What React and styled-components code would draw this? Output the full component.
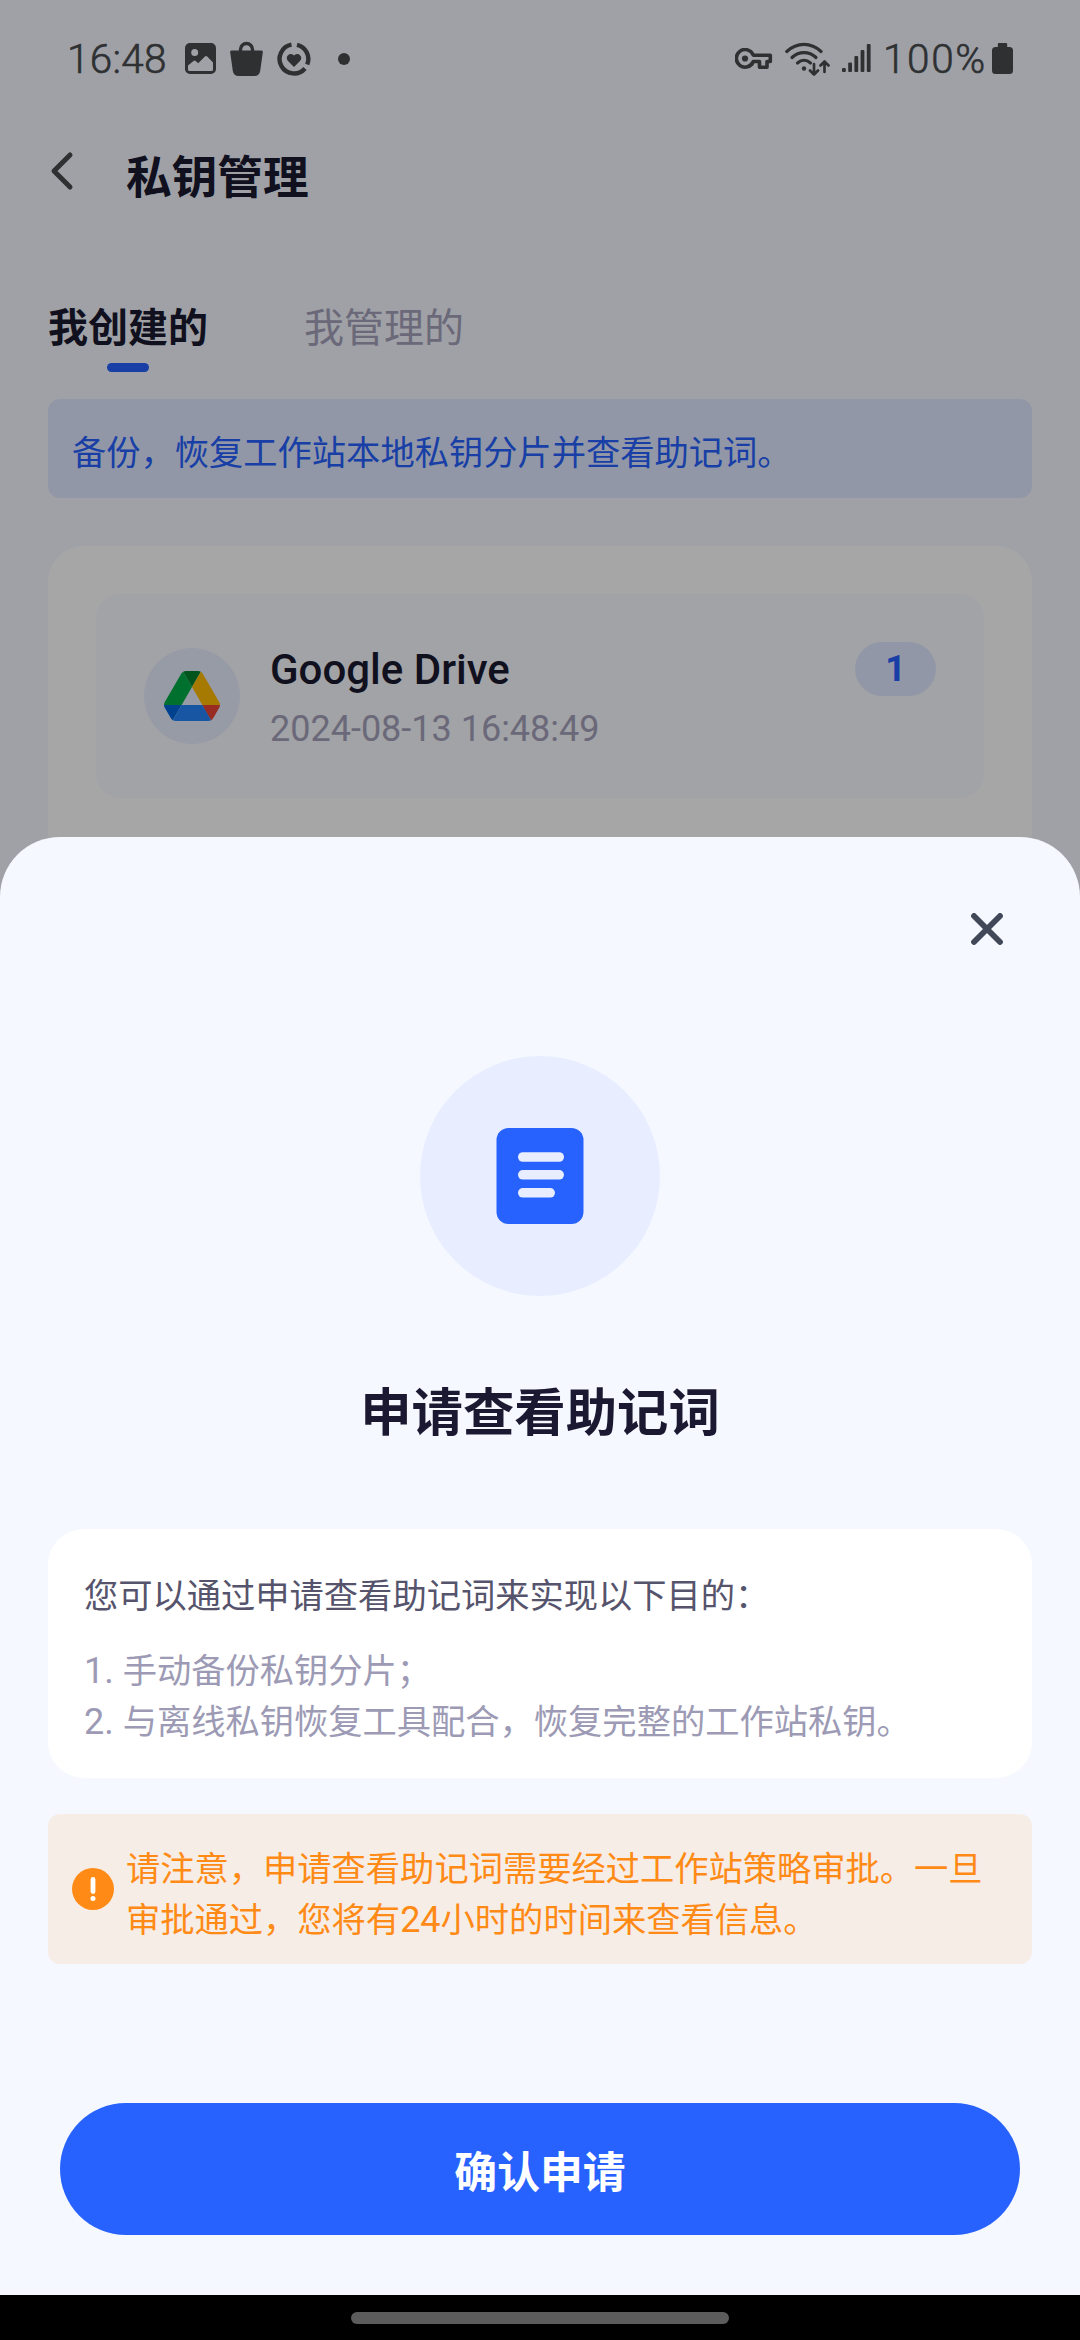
import React from "react";
import styled, { createGlobalStyle, css } from "styled-components";

const color = {
  page: "#f5f8ff",
  ink: "#1a1931",
  body: "#56546c",
  muted: "#9c9ab4",
  brand: "#2762ff",
  tint: "#e8eeff",
  warn: "#ff8a15",
};

const Global = createGlobalStyle`
  *, *::before, *::after { box-sizing: border-box; }
  body {
    margin: 0;
    background: ${color.page};
    font-family: "Noto Sans CJK SC", Roboto, sans-serif;
    color: ${color.ink};
  }
  p, h1, h2, ol { margin: 0; padding: 0; }
  button { border: 0; padding: 0; background: none; font: inherit; }
  svg { display: block; flex: none; }
`;

const Phone = styled.div`
  position: relative;
  display: flex;
  flex-direction: column;
  width: 1080px;
  height: 2340px;
  overflow: hidden;
`;

const latin = css`
  font-family: Roboto, sans-serif;
`;

/* Latin digits are drawn a little larger than the surrounding Han glyphs */
const Latin = styled.span`
  ${latin}
  font-size: 36px;
  line-height: 1;
`;

const StatusBar = styled.header`
  display: flex;
  justify-content: space-between;
  height: 120px;
  padding: 0 67px 3px 67px;
  align-items: center;
  color: #474a4e;
`;

const StatusGroup = styled.div`
  display: flex;
  align-items: center;
  gap: ${(p) => p.$gap}px;
`;

const StatusText = styled.span`
  ${latin}
  width: ${(p) => p.$width}px;
  font-size: 40.5px;
  font-weight: 300;
  -webkit-text-stroke: 0.6px currentColor;
  line-height: 48px;
  letter-spacing: ${(p) => p.$track || 0}px;
  white-space: nowrap;
`;

const AppBar = styled.div`
  display: flex;
  align-items: center;
  height: 114px;
  padding: 0 48px;
  gap: 51px;
`;

const BarTitle = styled.h1`
  font-size: 45.7px;
  line-height: 60px;
  font-weight: 700;
  padding-bottom: 6px;
`;

const BackButton = styled.button`
  color: #474a4e;
  padding-bottom: 13px;
`;

const Tabs = styled.nav`
  display: flex;
  gap: 96px;
  padding: 62px 48px 0;
  height: 165px;
`;

const Tab = styled.div`
  display: flex;
  flex-direction: column;
  align-items: center;
  font-size: 40px;
  line-height: 58px;
  font-weight: ${(p) => (p.$active ? 700 : 400)};
  color: ${(p) => (p.$active ? color.ink : "#a5a2bb")};

  &::after {
    content: "";
    width: 42px;
    height: 9px;
    margin-top: 9px;
    border-radius: 5px;
    background: ${(p) => (p.$active ? color.brand : "transparent")};
  }
`;

const Banner = styled.p`
  margin: 0 48px;
  padding: 3px 24px 0;
  height: 99px;
  line-height: 96px;
  border-radius: 12px;
  background: #dfe9ff;
  color: ${color.brand};
  font-size: 34.28px;
`;

const Card = styled.section`
  flex: 1;
  margin: 48px 48px 0;
  padding: 48px;
  border-radius: 36px 36px 0 0;
  background: #fff;
`;

const BackupRow = styled.div`
  display: flex;
  align-items: center;
  height: 204px;
  padding: 0 48px;
  border-radius: 24px;
  background: #f8faff;
`;

const RoundIcon = styled.div`
  display: grid;
  place-items: center;
  flex: none;
  width: ${(p) => p.$size}px;
  height: ${(p) => p.$size}px;
  border-radius: 50%;
  background: ${color.tint};
`;

const BackupText = styled.div`
  ${latin}
  flex: 1;
  display: flex;
  flex-direction: column;
  gap: 10px;
  margin-left: 30px;
  padding-top: 5px;
`;

const BackupName = styled.div`
  font-size: 42px;
  font-weight: 500;
  line-height: 50px;
`;

const BackupDate = styled.div`
  font-size: 36px;
  line-height: 48px;
  color: #a5a2bb;
`;

const Badge = styled.span`
  ${latin}
  align-self: flex-start;
  width: 81px;
  height: 54px;
  margin-top: 48px;
  line-height: 54px;
  text-align: center;
  font-size: 36px;
  font-weight: 700;
  border-radius: 27px;
  color: ${color.brand};
  background: #dfe9ff;
`;

const Scrim = styled.div`
  position: absolute;
  inset: 0;
  background: rgba(0, 0, 0, 0.35);
`;

const Sheet = styled.section`
  position: absolute;
  left: 0;
  right: 0;
  bottom: 45px;
  height: 1458px;
  display: flex;
  flex-direction: column;
  border-radius: 60px 60px 0 0;
  background: ${color.page};
  padding: 76px 48px 60px;
`;

const CloseButton = styled.button`
  align-self: flex-end;
  margin-right: 29px;
  color: #414857;
`;

const Hero = styled.div`
  display: flex;
  flex-direction: column;
  align-items: center;
  margin-top: 111px;
`;

const SheetTitle = styled.h2`
  margin-top: 76px;
  font-size: 51.4px;
  line-height: 74px;
  font-weight: 700;
`;

const InfoBox = styled.div`
  height: 249px;
  margin-top: 83px;
  padding: 39px 36px 0;
  border-radius: 36px;
  background: #fff;
  font-size: 34.28px;
  line-height: 51px;
`;

const InfoLead = styled.p`
  color: ${color.body};
`;

const InfoList = styled.ol`
  list-style: none;
  margin-top: 24px;
  color: ${color.muted};
`;

const InfoItem = styled.li`
  height: 51px;
  white-space: nowrap;
`;

const Alert = styled.div`
  display: flex;
  align-items: center;
  gap: 12px;
  height: 150px;
  margin-top: 36px;
  padding: 0 24px;
  border-radius: 12px;
  background: #f6ede7;
  color: ${color.warn};
`;

const AlertText = styled.p`
  font-size: 34.28px;
  line-height: 51px;
  padding-top: 6px;
  white-space: nowrap;
`;

const ConfirmButton = styled.button`
  height: 132px;
  margin: auto 12px 0;
  border-radius: 66px;
  background: ${color.brand};
  color: #fff;
  font-size: 42.85px;
  font-weight: 700;
`;

const NavBar = styled.footer`
  position: absolute;
  left: 0;
  right: 0;
  bottom: 0;
  height: 45px;
  padding-top: 1px;
  display: grid;
  place-items: center;
  background: #000;
`;

const NavPill = styled.div`
  width: 378px;
  height: 12px;
  border-radius: 6px;
  background: #5c5c5c;
`;

const GalleryIcon = () => (
  <svg width="31" height="31" viewBox="0 0 31 31" fill="currentColor">
    <path
      fillRule="evenodd"
      d="M5 0h21a5 5 0 0 1 5 5v21a5 5 0 0 1-5 5H5a5 5 0 0 1-5-5V5a5 5 0 0 1 5-5zM9.7 6a3.5 3.5 0 1 0 0 7 3.5 3.5 0 0 0 0-7zM3 22.5V26.500a1.500 1.500 0 0 0 1.500 1.500h22a1.500 1.500 0 0 0 1.500-1.500V19.500l-5.800-5.900a1.600 1.600 0 0 0-2.300 0l-6.700 6.700-2.500-2.300a1.600 1.600 0 0 0-2.200 0z"
    />
  </svg>
);

const BagIcon = () => (
  <svg width="33" height="36" viewBox="0 0 33 36">
    <path d="M10.500 11V8.500a6 6 0 0 1 12 0V11" fill="none" stroke="currentColor" strokeWidth="3.400" />
    <path
      d="M1.800 9.500h29.400a1.600 1.600 0 0 1 1.600 1.900L30.200 30a6 6 0 0 1-6 5H8.800a6 6 0 0 1-6-5L.2 11.400a1.600 1.600 0 0 1 1.600-1.900z"
      fill="currentColor"
    />
  </svg>
);

const HeartRingIcon = () => (
  <svg width="34" height="34" viewBox="0 0 34 34">
    <g fill="none" stroke="currentColor" strokeWidth="4.400">
      <path d="M14.500 2.700A14.500 14.500 0 1 0 28 26.500" />
      <path d="M20 2.800A14.500 14.500 0 0 1 30.200 22.500" />
    </g>
    <path
      d="M17 25l-6-6a4 4 0 0 1 0-5.800 4 4 0 0 1 6 .4 4 4 0 0 1 6-.4 4 4 0 0 1 0 5.800z"
      fill="currentColor"
    />
  </svg>
);

const DotSvg = (props) => (
  <svg width="12" height="12" viewBox="0 0 12 12" {...props}>
    <circle cx="6" cy="6" r="6" fill="currentColor" />
  </svg>
);

const DotIcon = styled(DotSvg)`
  margin-left: 13px;
`;

const KeyIcon = () => (
  <svg width="38" height="22" viewBox="0 0 38 22">
    <path
      d="M18.300 7.200H35.300v6.300H32v5.800H24.500v-5.800H18.300A8.800 8.800 0 1 1 18.300 7.200z"
      fill="none"
      stroke="currentColor"
      strokeWidth="3.600"
      strokeLinejoin="round"
    />
    <circle cx="10" cy="10.500" r="3.100" fill="currentColor" />
  </svg>
);

const WifiIcon = () => (
  <svg width="45" height="34" viewBox="0 0 45 34" fill="none" stroke="currentColor" strokeLinecap="round">
    <path d="M1.800 9.500C12 0 26 0 36 9.500" strokeWidth="3.200" />
    <path d="M7 15.500c7-6.500 17-6.500 24 0" strokeWidth="3.200" />
    <path d="M12.500 21c4-3.500 9-3.500 13 0" strokeWidth="3.200" />
    <circle cx="19" cy="26.500" r="2.200" fill="currentColor" stroke="none" />
    <g strokeWidth="2.700" strokeLinejoin="round">
      <path d="M29 22v10M25 28.500l4 4 4-4" />
      <path d="M39.500 30V20M35.500 23.500l4-4 4 4" />
    </g>
  </svg>
);

const SignalIcon = () => (
  <svg width="29" height="29" viewBox="0 0 29 29" fill="currentColor">
    <rect x="0" y="24" width="3.800" height="4" rx="1" />
    <rect x="6.200" y="18.500" width="3.800" height="9.500" rx="1" />
    <rect x="12.400" y="12" width="3.800" height="16" rx="1" />
    <rect x="18.600" y="6" width="3.800" height="22" rx="1" />
    <rect x="24.800" y="0" width="3.800" height="28" rx="1" />
  </svg>
);

const BatteryIcon = () => (
  <svg width="21" height="31" viewBox="0 0 21 31" fill="currentColor">
    <path d="M7 0h7a1.200 1.200 0 0 1 1.200 1.200V4H17.500A3.500 3.500 0 0 1 21 7.500v20a3.500 3.500 0 0 1-3.500 3.500h-14A3.500 3.500 0 0 1 0 27.500v-20A3.500 3.500 0 0 1 3.500 4H5.800V1.200A1.200 1.200 0 0 1 7 0z" />
  </svg>
);

const BackIcon = () => (
  <svg width="27" height="40" viewBox="0 0 27 40">
    <path
      d="M22 4L6 20l16 16"
      fill="none"
      stroke="currentColor"
      strokeWidth="5"
      strokeLinecap="round"
      strokeLinejoin="round"
    />
  </svg>
);

const DriveLogo = () => (
  <svg width="56" height="50" viewBox="0 0 87.3 78">
    <path d="m6.600 66.850 3.850 6.650c.8 1.400 1.950 2.500 3.300 3.300l13.750-23.800h-27.500c0 1.550.4 3.100 1.200 4.500z" fill="#0066da" />
    <path d="m43.650 25-13.750-23.800c-1.350.8-2.500 1.900-3.300 3.300l-25.400 44a9.060 9.060 0 0 0 -1.200 4.500h27.500z" fill="#00ac47" />
    <path d="m73.550 76.800c1.350-.8 2.500-1.900 3.300-3.300l1.600-2.750 7.650-13.250c.8-1.400 1.200-2.950 1.200-4.500h-27.502l5.852 11.500z" fill="#ea4335" />
    <path d="m43.650 25 13.750-23.800c-1.350-.8-2.900-1.200-4.500-1.200h-18.500c-1.600 0-3.150.45-4.500 1.200z" fill="#00832d" />
    <path d="m59.800 53h-32.300l-13.750 23.800c1.350.8 2.900 1.200 4.500 1.200h50.800c1.600 0 3.150-.45 4.500-1.200z" fill="#2684fc" />
    <path d="m73.400 26.500-12.700-22c-.8-1.400-1.950-2.500-3.300-3.300l-13.750 23.800 16.150 28h27.450c0-1.550-.4-3.100-1.200-4.500z" fill="#ffba00" />
  </svg>
);

const CloseIcon = () => (
  <svg width="32" height="32" viewBox="0 0 32 32">
    <path d="M3 3l26 26M29 3L3 29" fill="none" stroke="currentColor" strokeWidth="5.800" strokeLinecap="round" />
  </svg>
);

const DocumentIcon = () => (
  <svg width="88" height="96" viewBox="0 0 88 96">
    <rect x=".5" width="87" height="96" rx="12" fill={color.brand} />
    <g fill={color.tint}>
      <rect x="22" y="24.200" width="46" height="9.600" rx="4.800" />
      <rect x="22" y="42" width="46" height="9.600" rx="4.800" />
      <rect x="22" y="60" width="37" height="9.600" rx="4.800" />
    </g>
  </svg>
);

const AlertIcon = () => (
  <svg width="42" height="42" viewBox="0 0 42 42">
    <circle cx="21" cy="21" r="21" fill={color.warn} />
    <rect x="18.600" y="9" width="4.800" height="17" rx="2.400" fill="#fff" />
    <circle cx="21" cy="30.500" r="2.500" fill="#fff" />
  </svg>
);

export default function App() {
  return (
    <>
      <Global />
      <Phone>
        <StatusBar>
          <StatusGroup $gap={14}>
            <StatusText $width={104} $track={0.3}>
              16:48
            </StatusText>
            <GalleryIcon />
            <BagIcon />
            <HeartRingIcon />
            <DotIcon />
          </StatusGroup>
          <StatusGroup $gap={12}>
            <KeyIcon />
            <WifiIcon />
            <SignalIcon />
            <StatusText $width={97} $track={1.6}>
              100%
            </StatusText>
            <BatteryIcon />
          </StatusGroup>
        </StatusBar>

        <AppBar>
          <BackButton aria-label="返回">
            <BackIcon />
          </BackButton>
          <BarTitle>私钥管理</BarTitle>
        </AppBar>

        <Tabs>
          <Tab $active>我创建的</Tab>
          <Tab>我管理的</Tab>
        </Tabs>

        <Banner>备份，恢复工作站本地私钥分片并查看助记词。</Banner>

        <Card>
          <BackupRow>
            <RoundIcon $size={96}>
              <DriveLogo />
            </RoundIcon>
            <BackupText>
              <BackupName>Google Drive</BackupName>
              <BackupDate>2024-08-13 16:48:49</BackupDate>
            </BackupText>
            <Badge>1</Badge>
          </BackupRow>
        </Card>

        <Scrim />

        <Sheet>
          <CloseButton aria-label="关闭">
            <CloseIcon />
          </CloseButton>
          <Hero>
            <RoundIcon $size={240}>
              <DocumentIcon />
            </RoundIcon>
            <SheetTitle>申请查看助记词</SheetTitle>
          </Hero>
          <InfoBox>
            <InfoLead>您可以通过申请查看助记词来实现以下目的：</InfoLead>
            <InfoList>
              <InfoItem>
                <Latin>1. </Latin>手动备份私钥分片；
              </InfoItem>
              <InfoItem>
                <Latin>2. </Latin>与离线私钥恢复工具配合，恢复完整的工作站私钥。
              </InfoItem>
            </InfoList>
          </InfoBox>
          <Alert>
            <AlertIcon />
            <AlertText>
              请注意，申请查看助记词需要经过工作站策略审批。一旦
              <br />
              审批通过，您将有<Latin>24</Latin>小时的时间来查看信息。
            </AlertText>
          </Alert>
          <ConfirmButton>确认申请</ConfirmButton>
        </Sheet>

        <NavBar>
          <NavPill />
        </NavBar>
      </Phone>
    </>
  );
}
